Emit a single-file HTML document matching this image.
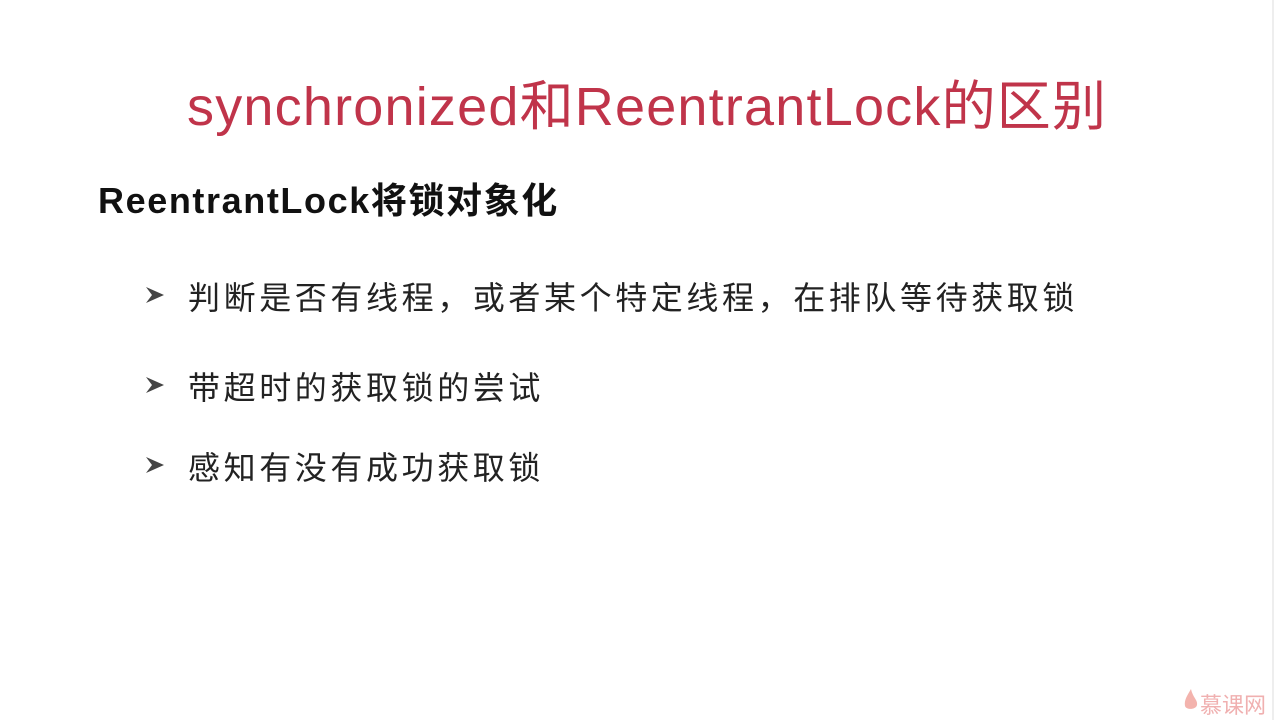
<!DOCTYPE html>
<html><head><meta charset="utf-8"><style>
body{margin:0;width:1280px;height:720px;background:#fff;position:relative;overflow:hidden;font-family:"Liberation Sans","Noto Sans CJK SC",sans-serif;}
.t{position:absolute;left:187px;top:62px;font-size:54px;color:#c0344a;white-space:nowrap;letter-spacing:1.2px}
.h{position:absolute;left:98px;top:172px;font-size:36px;font-weight:bold;color:#111;white-space:nowrap;letter-spacing:1.6px}
.b{position:absolute;left:188px;font-size:32px;color:#222;white-space:nowrap;letter-spacing:3.6px}
.a{position:absolute;left:145px;width:20px;height:20px}
.logo{position:absolute;left:1200px;top:688px;font-size:22px;color:#f0b0b0;}
.edge{position:absolute;left:1272px;top:0;width:2px;height:720px;background:#eee}
</style></head><body>
<div class="t">synchronized和ReentrantLock的区别</div>
<div class="h">ReentrantLock将锁对象化</div>
<svg class="a" style="top:285px" viewBox="0 0 20 20"><path d="M1 2 L19 10 L1 18 L7 10 Z" fill="#444"/></svg>
<div class="b" style="top:273px">判断是否有线程，或者某个特定线程，在排队等待获取锁</div>
<svg class="a" style="top:375px" viewBox="0 0 20 20"><path d="M1 2 L19 10 L1 18 L7 10 Z" fill="#444"/></svg>
<div class="b" style="top:363px">带超时的获取锁的尝试</div>
<svg class="a" style="top:455px" viewBox="0 0 20 20"><path d="M1 2 L19 10 L1 18 L7 10 Z" fill="#444"/></svg>
<div class="b" style="top:443px">感知有没有成功获取锁</div>
<svg style="position:absolute;left:1183px;top:688px" width="16" height="24" viewBox="0 0 16 24"><path d="M8 1 C4 8 1 12 2 18 C3 22 13 22 14 17 C15 12 10 10 8 1Z" fill="#f3b3ad"/></svg>
<div class="logo">慕课网</div>
<div class="edge"></div>
</body></html>
